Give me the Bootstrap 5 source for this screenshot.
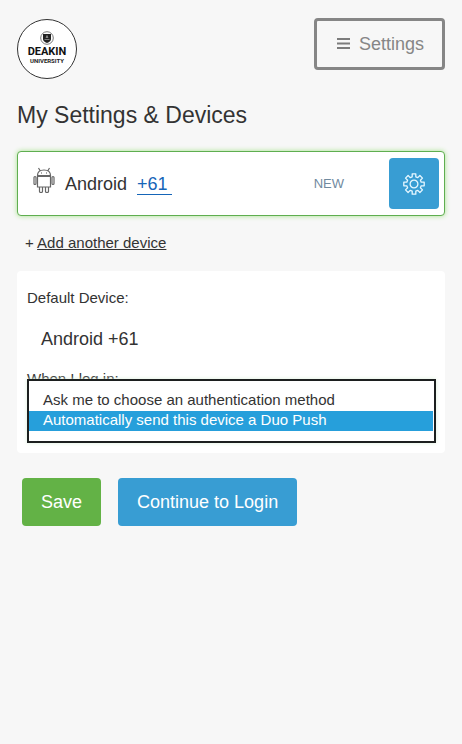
<!DOCTYPE html>
<html lang="en">
<head>
<meta charset="utf-8">
<meta name="viewport" content="width=device-width, initial-scale=1">
<title>My Settings &amp; Devices</title>
<link href="https://cdn.jsdelivr.net/npm/bootstrap@5.3.0/dist/css/bootstrap.min.css" rel="stylesheet">
<style>
  body { background: #f7f7f7; color: #333; font: 15px/20px "Liberation Sans", Arial, sans-serif; }
  .page { padding: 18px 17px 0; }
  .btn { font-size: 18px; line-height: 24px; border-radius: 4px; }
  .btn-menu { border: 3px solid #868686; color: #868686; padding: 11px 18px 11px 19px; }
  .btn-green { background: #63b246; color: #fff; padding: 12px 19px; border: 0; }
  .btn-blue { background: #389dd3; color: #fff; padding: 12px 19px; border: 0; }
  .page-title { font-size: 23px; line-height: 30px; font-weight: 400; margin: 20px 0 21px; }
  .device { background: #fff; border: 1px solid #5fae50; border-radius: 4px; box-shadow: 0 0 5px #a6e28c; padding: 6px 5px 6px 15px; }
  .device-name { font-size: 18px; line-height: 24px; padding-left: 10px; }
  .device-name a { color: #1565b8; padding-right: 4px; text-decoration: none; border-bottom: 1px solid #1565b8; line-height: 18px; }
  .tag { font-size: 13px; color: #708a9f; padding-right: 45px; }
  .btn-gear { width: 50px; height: 51px; padding: 0; }
  .add-line { padding: 17px 8px 18px; font-size: 15px; }
  .add-line a { color: #333; }
  .panel { background: #fff; border-radius: 4px; padding: 17px 10px 10px; }
  .default-device { font-size: 18px; line-height: 24px; padding: 19px 14px 18px; }
  .picker { height: 54px; }
  .picker select {
    top: -10px; left: 0; height: 64px; width: calc(100% + 1px); padding: 10px 1px 8px 0;
    border: 2px solid #1c1f1f; border-radius: 0; background: #fff; color: #333;
    font: 15px/20px "Liberation Sans", Arial, sans-serif; overflow: hidden; outline: 0; appearance: none;
    box-shadow: 0 0 4px #dcefdc;
  }
  .picker option { padding: 0 14px; height: 20px; min-height: 20px; line-height: 20px; color: #333; }
  .picker option:checked { background: #269fdb linear-gradient(#269fdb, #269fdb); color: #fff; -webkit-text-fill-color: #fff; }
  .actions { padding: 25px 5px; gap: 17px; }
</style>
<script src="https://cdn.jsdelivr.net/npm/bootstrap@5.3.0/dist/js/bootstrap.bundle.min.js"></script>
</head>
<body>
<div class="page">
  <header class="d-flex justify-content-between align-items-start">
    <svg width="60" height="62" viewBox="0 0 60 62" role="img" aria-label="Deakin University">
      <circle cx="30" cy="31" r="29.5" fill="#fff" stroke="#333"/>
      <circle cx="30" cy="20" r="6.300" fill="#fff" stroke="#555" stroke-width=".8"/>
      <path d="M26 16h8v5q0 2.500-4 4-4-1.500-4-4z" fill="#222"/>
      <path d="M27.500 21.500h5M30 17.500l-1 2h2z" stroke="#bbb" stroke-width=".6" fill="none"/>
      <text x="30" y="37" text-anchor="middle" font-family="Roboto, sans-serif" font-weight="700" font-size="11" fill="#111">DEAKIN</text>
      <text x="30" y="45" text-anchor="middle" font-family="Roboto, sans-serif" font-weight="700" font-size="6" fill="#222">UNIVERSITY</text>
    </svg>
    <button type="button" class="btn btn-menu d-flex align-items-center">
      <svg class="me-2" width="15" height="14" viewBox="0 0 15 14" aria-hidden="true"><path d="M1 2h13M1 6.500h13M1 11h13" stroke="#7c7c7c" stroke-width="2"/></svg>
      Settings
    </button>
  </header>

  <main>
    <h1 class="page-title">My Settings &amp; Devices</h1>

    <section class="device d-flex align-items-center">
      <svg class="mb-2" width="22" height="26" viewBox="0 0 22 26" fill="none" stroke="#666" stroke-width="1.200" aria-hidden="true">
        <path d="M4.500 8.500q0-5.500 6.500-5.500t6.500 5.500zM7 3.500L5.500 1M15 3.500L16.500 1"/>
        <path d="M4.500 9.500h13v10.500h-13z"/>
        <path d="M1 10.500q0-1 1-1t1 1v6q0 1-1 1t-1-1zM19 10.500q0-1 1-1t1 1v6q0 1-1 1t-1-1z"/>
        <path d="M6.500 20v4.500q0 1 1.500 1t1.500-1V20M12.500 20v4.500q0 1 1.500 1t1.500-1V20"/>
        <path d="M8 6h1M13 6h1" stroke="#555"/>
      </svg>
      <div class="device-name">Android&nbsp; <a href="#">+61</a></div>
      <span class="tag ms-auto">NEW</span>
      <button type="button" class="btn btn-blue btn-gear d-flex align-items-center justify-content-center" aria-label="Device options">
        <svg width="22" height="22" viewBox="-11 -11 22 22" fill="none" stroke="#e6f7ff" stroke-width="1.300" stroke-linejoin="round" aria-hidden="true">
          <circle r="3.900"/>
          <path d="M-1.800-7.200V-10.200H1.800V-7.200L3.800-6.400 5.900-8.500 8.500-5.900 6.400-3.800 7.200-1.800H10.200V1.800H7.200L6.400 3.800 8.500 5.900 5.900 8.500 3.800 6.400 1.800 7.200V10.200H-1.800V7.200L-3.800 6.400-5.900 8.500-8.500 5.900-6.400 3.800-7.200 1.800H-10.200V-1.800H-7.200L-6.400-3.800-8.500-5.900-5.900-8.500-3.800-6.400Z"/>
        </svg>
      </button>
    </section>

    <div class="add-line">+ <a href="#">Add another device</a></div>

    <form id="settings" class="panel">
      <div>Default Device:</div>
      <div class="default-device">Android +61</div>
      <label for="login-action" class="d-block">When I log in:</label>
      <div class="picker position-relative">
        <select id="login-action" class="position-absolute" size="2">
          <option>Ask me to choose an authentication method</option>
          <option selected>Automatically send this device a Duo Push</option>
        </select>
      </div>
    </form>

    <div class="actions d-flex">
      <button type="submit" form="settings" class="btn btn-green">Save</button>
      <button type="button" class="btn btn-blue">Continue to Login</button>
    </div>
  </main>
</div>
</body>
</html>
